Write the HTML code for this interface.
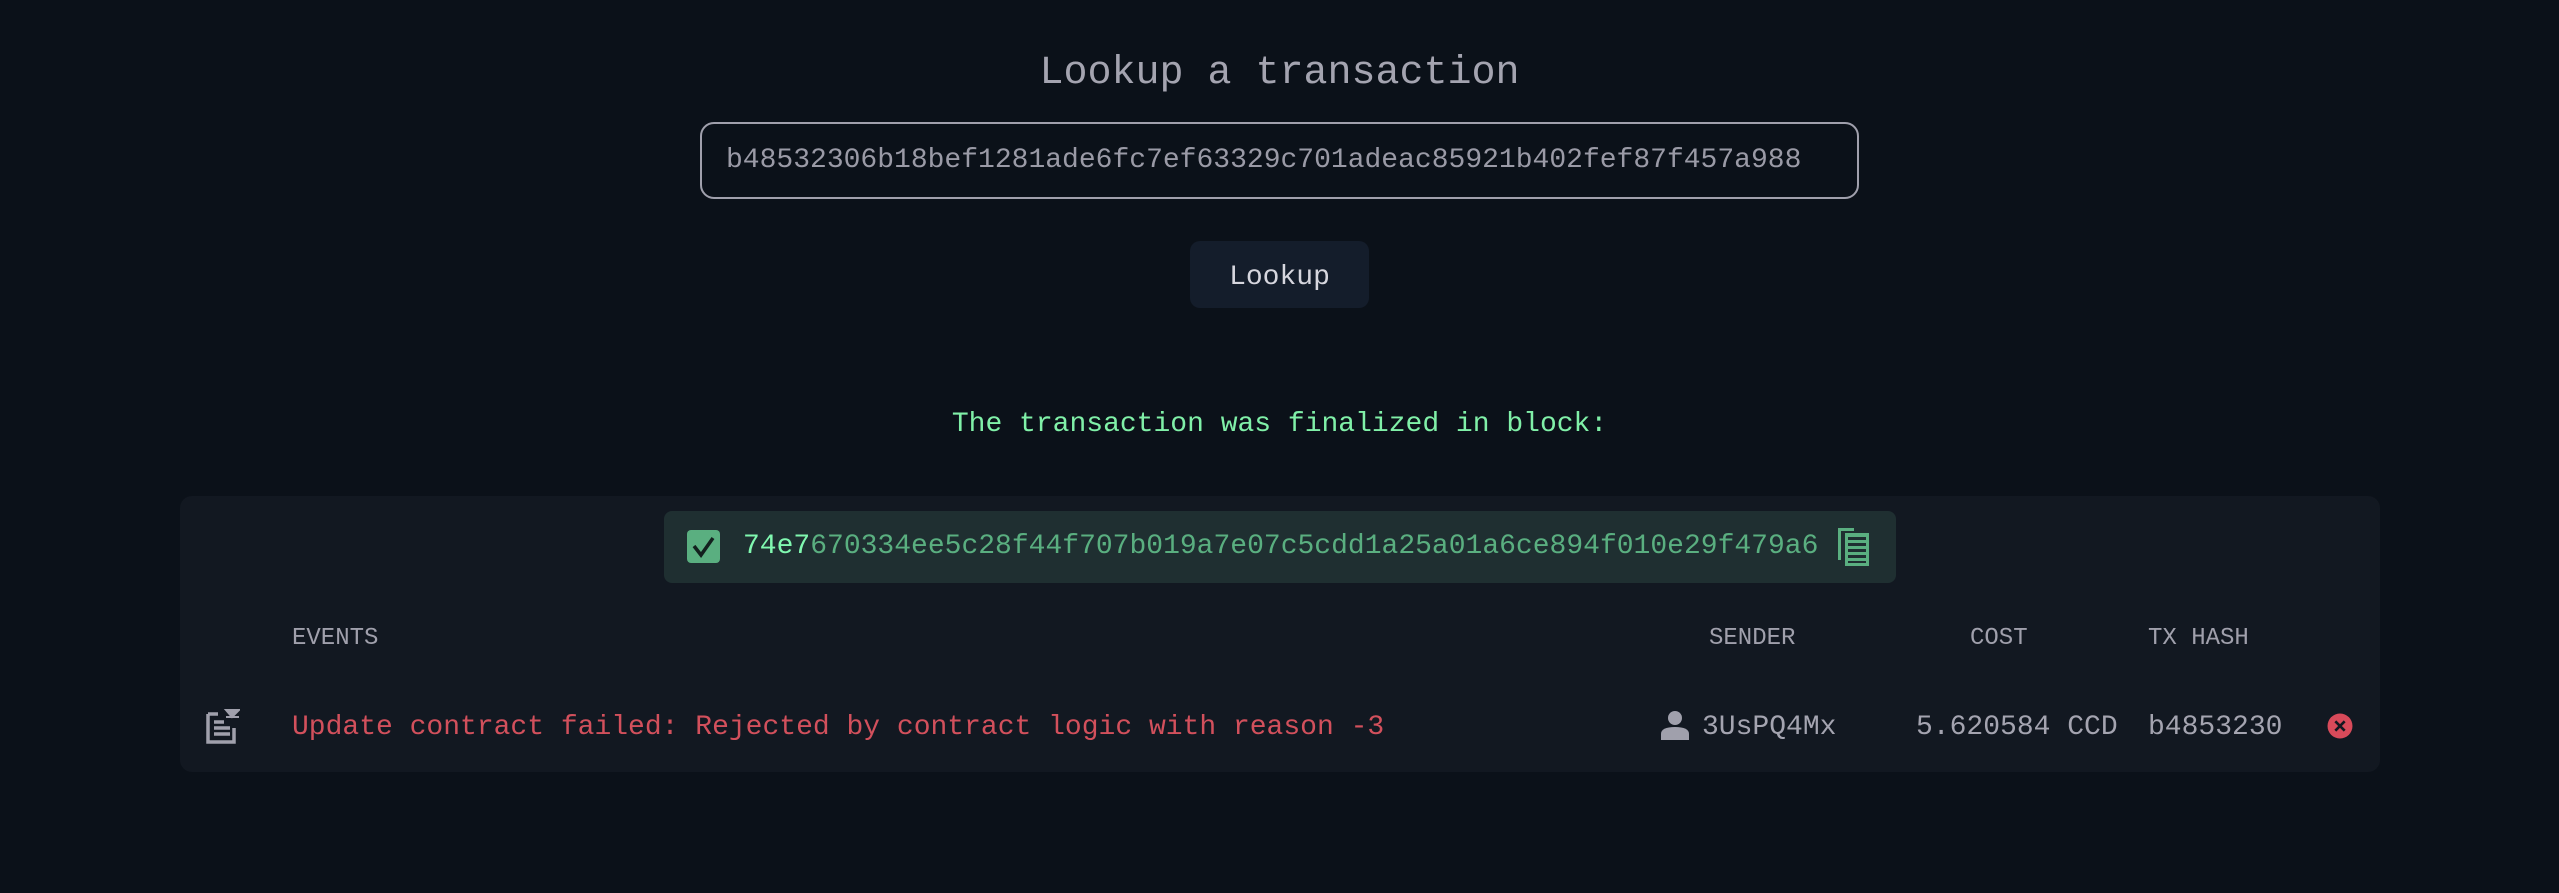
<!DOCTYPE html>
<html><head><meta charset="utf-8"><style>
*{margin:0;padding:0;box-sizing:border-box}
body{width:2559px;height:893px;background:#0b1119;font-family:"Liberation Mono",monospace;position:relative;overflow:hidden}
.a{position:absolute;white-space:nowrap}
</style></head><body>
<div class="a" style="left:0;width:2559px;top:48px;text-align:center;font-size:40px;line-height:52px;color:#a4a4b0">Lookup a transaction</div>
<div class="a" style="left:700px;top:122px;width:1159px;height:77px;border:2px solid #a0a0ac;border-radius:14px"></div>
<div class="a" style="left:726px;top:143px;font-size:28px;line-height:36px;color:#9a9aa6">b48532306b18bef1281ade6fc7ef63329c701adeac85921b402fef87f457a988</div>
<div class="a" style="left:1190px;top:241px;width:179px;height:67px;background:#141d2b;border-radius:10px;color:#d6d6de;font-size:28px;line-height:73px;text-align:center">Lookup</div>
<div class="a" style="left:0;width:2559px;top:405px;text-align:center;font-size:28px;line-height:40px;color:#80f0a8">The transaction was finalized in block:</div>
<div class="a" style="left:180px;top:496px;width:2200px;height:276px;background:#121821;border-radius:12px"></div>
<div class="a" style="left:664px;top:511px;width:1232px;height:72px;background:#1f2f31;border-radius:8px"></div>
<svg class="a" style="left:687px;top:530px" width="33" height="33" viewBox="0 0 33 33"><rect width="33" height="33" rx="4" fill="#5aaf80"/><path d="M7 16 L14 25 L26 8" stroke="#13201e" stroke-width="3.5" fill="none"/></svg>
<div class="a" style="left:743px;top:529px;font-size:28px;line-height:36px;color:#5aaf80"><span style="color:#80f8b0">74e7</span>670334ee5c28f44f707b019a7e07c5cdd1a25a01a6ce894f010e29f479a6</div>
<svg class="a" style="left:1838px;top:528px" width="32" height="38" viewBox="0 0 32 38" fill="#5aaf80"><rect x="0" y="0" width="3" height="32"/><rect x="0" y="0" width="16" height="3"/><rect x="7" y="5" width="24" height="33"/><g fill="#1f2f31"><rect x="10" y="9" width="18" height="3"/><rect x="10" y="15" width="18" height="3"/><rect x="10" y="21" width="18" height="3"/><rect x="10" y="27" width="18" height="3"/><rect x="10" y="33" width="18" height="2"/></g></svg>
<div class="a" style="left:292px;top:624px;font-size:24px;line-height:30px;color:#a0a0ac">EVENTS</div>
<div class="a" style="left:1709px;top:624px;font-size:24px;line-height:30px;color:#a0a0ac">SENDER</div>
<div class="a" style="left:1970px;top:624px;font-size:24px;line-height:30px;color:#a0a0ac">COST</div>
<div class="a" style="left:2148px;top:624px;font-size:24px;line-height:30px;color:#a0a0ac">TX HASH</div>
<svg class="a" style="left:206px;top:708px" width="34" height="36" viewBox="0 0 34 36"><path d="M2 6 H12 M2 6 V34 H28 V20" stroke="#a0a0ac" stroke-width="3.5" fill="none"/><path d="M8 14h10M8 20h16M8 26h16" stroke="#a0a0ac" stroke-width="3.5"/><path d="M20 2 L26 9 L33 2Z M20 9h13" fill="#a0a0ac" stroke="#a0a0ac" stroke-width="2"/></svg>
<div class="a" style="left:292px;top:710px;font-size:28px;line-height:36px;color:#d2505c">Update contract failed: Rejected by contract logic with reason -3</div>
<svg class="a" style="left:1661px;top:710px" width="28" height="30" viewBox="0 0 28 30" fill="#a0a0ac"><circle cx="14" cy="8" r="7"/><path d="M0 30 V24 Q0 17 14 17 Q28 17 28 24 V30Z"/></svg>
<div class="a" style="left:1702px;top:710px;font-size:28px;line-height:36px;color:#a4a4b0">3UsPQ4Mx</div>
<div class="a" style="left:1916px;top:710px;font-size:28px;line-height:36px;color:#a4a4b0">5.620584 CCD</div>
<div class="a" style="left:2148px;top:710px;font-size:28px;line-height:36px;color:#a4a4b0">b4853230</div>
<svg class="a" style="left:2327px;top:713px" width="26" height="26" viewBox="0 0 25 25"><circle cx="12.5" cy="12.5" r="12" fill="#d84a5a"/><path d="M8 8L17 17M17 8L8 17" stroke="#121821" stroke-width="2.5"/></svg>
</body></html>
